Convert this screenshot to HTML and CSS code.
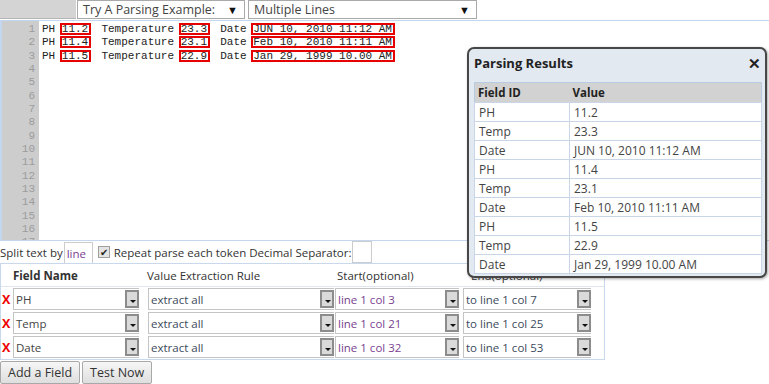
FILE: index.html
```html
<!DOCTYPE HTML>
<html>
<head>
<meta http-equiv="Content-Type" content="text/html; charset=utf-8">
<title>Text Parser</title>
<link rel="stylesheet" href="styles.css">
</head>
<body>
	<div class="toolbar">
		<div class="blank"></div>
		<div class="select sel-example">Try A Parsing Example:<i>▼</i></div>
		<div class="select sel-mode">Multiple Lines<i>▼</i></div>
	</div>

	<div class="editor">
		<div class="gutter">
			<div>1</div><div>2</div><div>3</div><div>4</div><div>5</div><div>6</div>
			<div>7</div><div>8</div><div>9</div><div>10</div><div>11</div><div>12</div>
			<div>13</div><div>14</div><div>15</div><div>16</div><div>17</div>
		</div>
		<div class="code">
			<div>PH <b>11.2</b>  Temperature <b>23.3</b>  Date <b>JUN 10, 2010 11:12 AM</b></div>
			<div>PH <b>11.4</b>  Temperature <b>23.1</b>  Date <b>Feb 10, 2010 11:11 AM</b></div>
			<div>PH <b>11.5</b>  Temperature <b>22.9</b>  Date <b>Jan 29, 1999 10.00 AM</b></div>
		</div>
	</div>

	<div class="options">
		<span>Split text by</span>
		<span class="box split">line</span>
		<span class="check">✔</span>
		<span class="repeat">Repeat parse each token</span>
		<span class="decimal">Decimal Separator:</span>
		<span class="box sep"></span>
	</div>

	<div class="fields">
		<div class="frow head">
			<span class="h-name">Field Name</span>
			<span class="h-rule">Value Extraction Rule</span>
			<span class="h-start">Start(optional)</span>
			<span class="h-end">End(optional)</span>
		</div>
		<div class="frow">
			<span class="del">X</span>
			<div class="combo c-name"><span>PH</span><i class="dd"></i></div>
			<div class="combo c-rule"><span>extract all</span><i class="dd"></i></div>
			<div class="combo c-start"><span>line 1 col 3</span><i class="dd"></i></div>
			<div class="combo c-end"><span>to line 1 col 7</span><i class="dd"></i></div>
		</div>
		<div class="frow">
			<span class="del">X</span>
			<div class="combo c-name"><span>Temp</span><i class="dd"></i></div>
			<div class="combo c-rule"><span>extract all</span><i class="dd"></i></div>
			<div class="combo c-start"><span>line 1 col 21</span><i class="dd"></i></div>
			<div class="combo c-end"><span>to line 1 col 25</span><i class="dd"></i></div>
		</div>
		<div class="frow">
			<span class="del">X</span>
			<div class="combo c-name"><span>Date</span><i class="dd"></i></div>
			<div class="combo c-rule"><span>extract all</span><i class="dd"></i></div>
			<div class="combo c-start"><span>line 1 col 32</span><i class="dd"></i></div>
			<div class="combo c-end"><span>to line 1 col 53</span><i class="dd"></i></div>
		</div>
	</div>

	<div class="actions">
		<button>Add a Field</button>
		<button>Test Now</button>
	</div>

	<!-- 结果弹窗 -->
	<div class="popup">
		<div class="popup-title">Parsing Results<span class="close">✕</span></div>
		<table class="results">
			<tr><th>Field ID</th><th>Value</th></tr>
			<tr><td>PH</td><td>11.2</td></tr>
			<tr><td>Temp</td><td>23.3</td></tr>
			<tr><td>Date</td><td>JUN 10, 2010 11:12 AM</td></tr>
			<tr><td>PH</td><td>11.4</td></tr>
			<tr><td>Temp</td><td>23.1</td></tr>
			<tr><td>Date</td><td>Feb 10, 2010 11:11 AM</td></tr>
			<tr><td>PH</td><td>11.5</td></tr>
			<tr><td>Temp</td><td>22.9</td></tr>
			<tr><td>Date</td><td>Jan 29, 1999 10.00 AM</td></tr>
		</table>
	</div>
</body>
</html>
```

FILE: styles.css
```css
body {
	margin: 0;
	font-family: "Open Sans", "Liberation Sans", sans-serif;
	font-size: 11.5px;
	color: #333;
	background: #fff;
}

/* 顶部下拉框 */
.toolbar {
	display: flex;
	height: 20px;
}
.blank {
	width: 76px;
	height: 18px;
	background: #d4d4d4;
	border-bottom: 1px solid #b5b5b5;
}
.select {
	position: relative;
	box-sizing: border-box;
	height: 19px;
	border: 1px solid #a9a9a9;
	line-height: 17px;
	padding-left: 5px;
	font-size: 12.5px;
	color: #444;
}
.select i {
	position: absolute;
	right: 6px;
	top: 0;
	font-style: normal;
	font-size: 11px;
	color: #111;
}
.sel-example {
	width: 168px;
	margin-left: 1px;
}
.sel-mode {
	width: 229px;
	margin-left: 3px;
}

/* 编辑器 */
.editor {
	display: flex;
	height: 219px;
	border-top: 1px solid #c3d7f0;
	border-bottom: 1px solid #c3d7f0;
	overflow: hidden;
	font: 11px/13.33px "Liberation Mono", monospace;
}
.gutter {
	box-sizing: border-box;
	width: 39px;
	border-left: 2px solid #c3d7f0;
	background: #cdcdcd;
	color: #9c9c9c;
	text-align: right;
	padding: 2px 4px 0 0;
}
.code {
	padding: 2px 0 0 3px;
	color: #222;
}
.code div {
	white-space: pre;
}
.code b {
	position: relative;
	font-weight: normal;
}
.code b::after {
	content: "";
	position: absolute;
	left: -2px;
	right: -3px;
	top: 0;
	bottom: 0;
	border: 2px solid #e60000;
}

/* 选项 */
.options {
	display: flex;
	align-items: center;
	height: 22px;
}
.box {
	box-sizing: border-box;
	height: 21px;
	border: 1px solid #ccc;
	border-bottom: none;
	background: #fff;
	color: #7a3f8f;
	line-height: 22px;
	padding-left: 2px;
	align-self: flex-end;
}
.split {
	width: 29px;
	margin-left: 1px;
}
.check {
	box-sizing: border-box;
	width: 12px;
	height: 12px;
	margin-left: 5px;
	border: 1px solid #a0a0a0;
	background: #e4e4e4;
	font-size: 10px;
	line-height: 10px;
	text-align: center;
	color: #222;
}
.repeat {
	margin-left: 4px;
}
.decimal {
	margin-left: 3px;
}
.sep {
	width: 20px;
	height: 22px;
	border-bottom: 1px solid #ccc;
	margin-left: 1px;
}

/* 字段表 */
.fields {
	box-sizing: border-box;
	width: 605px;
	border: 1px solid #c9d8ec;
}
.frow {
	display: flex;
	align-items: center;
	height: 24px;
}
.head {
	height: 22px;
	border-bottom: 1px solid #dde6f1;
}
.h-name {
	margin-left: 12px;
	width: 134px;
	font-weight: bold;
}
.h-rule {
	width: 190px;
}
.h-start {
	width: 134px;
}
.del {
	width: 11px;
	padding-left: 1px;
	color: #e00;
	font-weight: bold;
	font-size: 12.5px;
}
.combo {
	display: flex;
	align-items: center;
	box-sizing: border-box;
	height: 22px;
	border: 1px solid #c4c4c4;
	border-right: none;
	background: #fff;
	color: #444;
}
.combo span {
	flex: 1;
	padding-left: 2px;
	white-space: nowrap;
	overflow: hidden;
}
.c-name {
	width: 126px;
}
.c-rule {
	width: 186px;
	margin-left: 9px;
	color: #3c4a5c;
}
.c-start {
	width: 124px;
	margin-left: 1px;
	color: #7a3f8f;
}
.c-end {
	width: 128px;
	margin-left: 4px;
	color: #3c4a5c;
}
.dd {
	position: relative;
	box-sizing: border-box;
	width: 14px;
	height: 18px;
	border: 2px solid #8c8c8c;
	background: #dadada;
}
.dd::after {
	content: "";
	position: absolute;
	left: 3px;
	bottom: 3px;
	border-left: 3px solid transparent;
	border-right: 3px solid transparent;
	border-top: 3px solid #111;
}

/* 按钮 */
.actions {
	display: flex;
	gap: 2px;
	margin-top: 1px;
}
.actions button {
	height: 23px;
	padding: 0 7px;
	border: 1px solid #a8a8a8;
	border-radius: 2px;
	background: linear-gradient(#f6f6f6, #dedede);
	font-family: "Open Sans", "Liberation Sans", sans-serif;
	font-size: 12.5px;
	color: #333;
}

/* 弹窗 */
.popup {
	position: absolute;
	left: 467px;
	top: 47px;
	box-sizing: border-box;
	width: 300px;
	height: 231px;
	border: 2px solid #474747;
	border-radius: 7px;
	background: #e3e9f1;
	box-shadow: 1px 1px 3px rgba(0, 0, 0, 0.35);
}
.popup-title {
	position: relative;
	height: 33px;
	line-height: 29px;
	padding-left: 5px;
	font-size: 13px;
	font-weight: bold;
	color: #222;
}
.close {
	position: absolute;
	right: 4px;
	top: 0;
	font-size: 15px;
	color: #222;
}
.results {
	margin-left: 5px;
	width: 288px;
	border-collapse: collapse;
	border: 1px solid #b9cbe3;
	background: #fff;
	font-size: 12px;
}
.results th {
	height: 19px;
	padding: 0 0 0 3px;
	background: #d2d2d2;
	text-align: left;
	font-size: 11.5px;
	color: #222;
}
.results td {
	height: 18px;
	padding: 0 0 0 4px;
	border: 1px solid #c9d6e8;
	color: #444;
}
.results td:first-child {
	width: 90px;
}
```
